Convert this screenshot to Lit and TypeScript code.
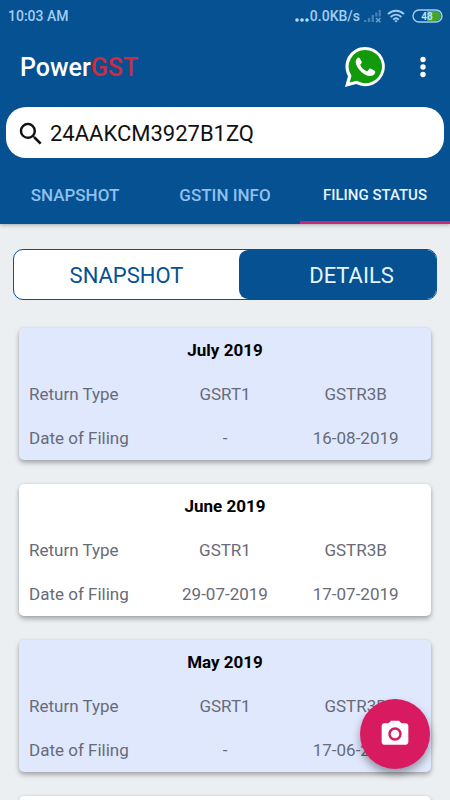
import { LitElement, html, css, nothing } from "lit";
import { customElement, property, state } from "lit/decorators.js";
import { classMap } from "lit/directives/class-map.js";

interface Filing {
  month: string;
  types: string[];
  dates: string[];
}

const FILINGS: Filing[] = [
  { month: "July 2019", types: ["GSRT1", "GSTR3B"], dates: ["-", "16-08-2019"] },
  { month: "June 2019", types: ["GSTR1", "GSTR3B"], dates: ["29-07-2019", "17-07-2019"] },
  { month: "May 2019", types: ["GSRT1", "GSTR3B"], dates: ["-", "17-06-2019"] },
];

@customElement("status-bar")
export class StatusBar extends LitElement {
  static styles = css`
    :host {
      display: flex;
      align-items: center;
      justify-content: space-between;
      height: 32px;
      padding: 0 7px 0 8px;
      color: #a3cdf3;
      font-size: 14px;
      font-weight: 500;
    }
    .right {
      display: flex;
      align-items: center;
    }
    .dots {
      width: 16px;
      height: 14px;
    }
    .signal {
      width: 18px;
      height: 14px;
      margin-left: 4px;
    }
    .wifi {
      width: 18px;
      height: 14px;
      margin-left: 5px;
    }
    .battery {
      width: 31px;
      height: 14px;
      margin-left: 7px;
    }
    .level {
      font-size: 10px;
      font-weight: 700;
    }
  `;

  render() {
    return html`
      <span>10:03 AM</span>
      <div class="right">
        <svg class="dots" viewBox="0 0 16 14" fill="#b9dcf8">
          <circle cx="3" cy="11" r="1.8" /><circle cx="8" cy="11" r="1.8" /><circle cx="13" cy="11" r="1.8" />
        </svg>
        <span>0.0KB/s</span>
        <svg class="signal" viewBox="0 0 18 14" fill="#4580b3">
          <rect x="0" y="11" width="2.4" height="2" />
          <rect x="3.8" y="9" width="2.4" height="4" />
          <rect x="7.6" y="6" width="2.4" height="7" />
          <rect x="11.2" y="3.5" width="2.2" height="4" />
          <rect x="14.6" y="1" width="2.2" height="6.5" />
          <path d="M12 9l4.4 4.2M16.4 9L12 13.2" stroke="#6fa2cd" stroke-width="1.4" />
        </svg>
        <svg class="wifi" viewBox="0 0 18 14" fill="none" stroke="#a3cdf3" stroke-width="1.9">
          <path d="M1 5.2C5.6.6 12.4.6 17 5.2M3.6 8c3.2-3.1 7.6-3.1 10.8 0M6.2 10.6c1.7-1.6 3.9-1.6 5.6 0" />
          <path d="M7.2 11.8L9 13.6l1.8-1.8q-1.8-1.2-3.6 0z" fill="#a3cdf3" stroke="none" />
        </svg>
        <svg class="battery" viewBox="0 0 31 14">
          <path d="M15 2h9a5 5 0 0 1 0 10h-9z" fill="#3fa535" />
          <rect x="1" y="1" width="29" height="12" rx="6" fill="none" stroke="#a3cdf3" stroke-width="1.4" />
          <text class="level" x="15" y="10.6" text-anchor="middle" fill="#c4e0f6">48</text>
        </svg>
      </div>
    `;
  }
}

@customElement("filing-card")
export class FilingCard extends LitElement {
  @property({ attribute: false }) filing?: Filing;

  static styles = css`
    :host {
      display: block;
      min-height: 132px;
      box-sizing: border-box;
      padding: 0 10px;
      border-radius: 5px;
      background: #fff;
      box-shadow: 0 3px 5px rgba(0, 0, 0, 0.28), 0 0 3px rgba(0, 0, 0, 0.1);
    }
    :host([tinted]) {
      background: #e0e8fe;
    }
    table {
      width: 100%;
      table-layout: fixed;
      border-collapse: collapse;
      color: #676b77;
      font-size: 17px;
      line-height: 44px;
    }
    caption {
      color: #000;
      font-weight: 700;
    }
    th,
    td {
      padding: 0;
      font-weight: 400;
      text-align: center;
      white-space: nowrap;
    }
    th {
      text-align: left;
    }
  `;

  render() {
    const f = this.filing;
    if (!f) return nothing;
    return html`
      <table>
        <caption>${f.month}</caption>
        <tbody>
          <tr><th scope="row">Return Type</th>${f.types.map((t) => html`<td>${t}</td>`)}</tr>
          <tr><th scope="row">Date of Filing</th>${f.dates.map((d) => html`<td>${d}</td>`)}</tr>
        </tbody>
      </table>
    `;
  }
}

@customElement("app-root")
export class AppRoot extends LitElement {
  @state() private tab = "FILING STATUS";
  @state() private view = "DETAILS";

  static styles = css`
    :host {
      display: flex;
      flex-direction: column;
      height: 100vh;
      overflow: hidden;
      background: #ebeff2;
      font-family: Roboto, "Liberation Sans", sans-serif;
    }
    button {
      border: 0;
      padding: 0;
      background: none;
      font-family: inherit;
      cursor: pointer;
    }
    header {
      flex: none;
      background: #055192;
      box-shadow: 0 1px 4px rgba(0, 0, 0, 0.3);
    }
    .bar {
      display: flex;
      align-items: center;
      height: 68px;
      box-sizing: border-box;
      padding: 2px 15px 0 20px;
    }
    h1 {
      flex: 1;
      margin: 0;
      color: #fff;
      font-size: 25px;
      font-weight: 500;
    }
    .accent {
      color: #cf2a41;
    }
    .chat,
    .more {
      display: flex;
    }
    .chat svg {
      width: 40px;
      height: 40px;
    }
    .more {
      margin-left: 26px;
    }
    .more svg {
      width: 24px;
      height: 24px;
    }
    .search {
      display: flex;
      align-items: center;
      gap: 4px;
      height: 51px;
      margin: 7px 6px 0;
      box-sizing: border-box;
      padding: 2px 10px 0;
      border-radius: 20px;
      background: #fff;
    }
    .search svg {
      flex: none;
      width: 30px;
      height: 30px;
    }
    .search input {
      flex: 1;
      min-width: 0;
      border: 0;
      padding: 0;
      outline: 0;
      background: none;
      color: #111;
      font-family: inherit;
      font-size: 22px;
    }
    .tabs {
      display: grid;
      grid-template-columns: repeat(3, 1fr);
      height: 66px;
    }
    .tab {
      border-top: 10px solid transparent;
      border-bottom: 3px solid transparent;
      color: #8fc0ee;
      font-size: 17px;
      font-weight: 500;
      white-space: nowrap;
    }
    .tab.on {
      border-bottom-color: #c3287a;
      color: #e4f5ff;
      font-size: 15px;
    }
    main {
      flex: 1;
      min-height: 0;
      overflow: hidden auto;
      scrollbar-width: none;
      padding: 25px 19px 0;
    }
    .switch {
      display: grid;
      grid-template-columns: 8fr 7fr;
      height: 51px;
      box-sizing: border-box;
      margin: 0 -6px 28px;
      border: 1px solid #055192;
      border-radius: 10px;
      background: #fff;
    }
    .choice {
      padding-top: 2px;
      border-radius: 9px;
      color: #055192;
      font-size: 22px;
    }
    .choice:last-child {
      padding-left: 28px;
    }
    .choice.on {
      background: #055192;
      color: #e4f5ff;
    }
    .cards {
      display: flex;
      flex-direction: column;
      gap: 24px;
      padding-bottom: 24px;
    }
    .fab {
      position: fixed;
      right: 20px;
      bottom: 31px;
      display: flex;
      align-items: center;
      justify-content: center;
      width: 70px;
      height: 70px;
      border-radius: 50%;
      background: #d81b60;
      box-shadow: 0 5px 9px rgba(0, 0, 0, 0.36);
    }
    .fab svg {
      width: 32px;
      height: 32px;
    }
  `;

  private renderTab(name: string) {
    const on = this.tab === name;
    return html`<button
      class=${classMap({ tab: true, on })}
      role="tab"
      aria-selected=${on}
      @click=${() => (this.tab = name)}
    >${name}</button>`;
  }

  private renderChoice(name: string) {
    const on = this.view === name;
    return html`<button
      class=${classMap({ choice: true, on })}
      aria-pressed=${on}
      @click=${() => (this.view = name)}
    >${name}</button>`;
  }

  render() {
    return html`
      <header>
        <status-bar></status-bar>
        <div class="bar">
          <h1>Power<span class="accent">GST</span></h1>
          <button class="chat" aria-label="WhatsApp">
            <svg viewBox="0 0 40 40">
              <path d="M20.3 0A19.6 19.6 0 1 1 11.2 37L0 40l3-10.8A19.6 19.6 0 0 1 20.3 0z" fill="#fff" />
              <path d="M20.4 3a16.6 16.6 0 1 1-8.6 30.8L4.6 35.6l1.9-6.8A16.6 16.6 0 0 1 20.4 3z" fill="#129a0c" />
              <path
                d="M14.6 11.1c-.5-.8-1.6-.7-2.4.1-1.7 1.7-1.9 4.2-.8 6.7 2 4.7 6.5 9.2 11.4 10.8 2.6.8 5.6.1 6.900-1.900.6-1 .7-2.200.2-2.700-.9-.9-3-1.900-4.200-2.400-.6-.2-1.100-.1-1.500.4l-1.400 1.700c-.4.5-.9.500-1.500.2-2.800-1.400-4.500-3.200-5.800-5.600-.3-.5-.2-.9.200-1.300.8-.9 1.300-1.600 1-2.400z"
                fill="#fff"
              />
            </svg>
          </button>
          <button class="more" aria-label="More options">
            <svg viewBox="0 0 24 24" fill="#fff">
              <circle cx="12" cy="4.5" r="2.7" /><circle cx="12" cy="12" r="2.7" /><circle cx="12" cy="19.5" r="2.7" />
            </svg>
          </button>
        </div>
        <div class="search">
          <svg viewBox="0 0 24 24" fill="#111">
            <path
              d="M15.5 14h-.79l-.28-.27A6.471 6.471 0 0 0 16 9.5 6.5 6.5 0 1 0 9.5 16c1.61 0 3.09-.59 4.23-1.57l.27.28v.79l5 4.99L20.49 19l-4.99-5zm-6 0C7.01 14 5 11.99 5 9.5S7.01 5 9.5 5 14 7.01 14 9.5 11.99 14 9.5 14z"
            />
          </svg>
          <input type="text" aria-label="GSTIN" value="24AAKCM3927B1ZQ" />
        </div>
        <nav class="tabs" role="tablist">
          ${["SNAPSHOT", "GSTIN INFO", "FILING STATUS"].map((n) => this.renderTab(n))}
        </nav>
      </header>
      <main>
        <div class="switch">${["SNAPSHOT", "DETAILS"].map((n) => this.renderChoice(n))}</div>
        <div class="cards">
          ${FILINGS.map((f, i) => html`<filing-card .filing=${f} ?tinted=${i % 2 === 0}></filing-card>`)}
          <filing-card></filing-card>
        </div>
      </main>
      <button class="fab" aria-label="Camera">
        <svg viewBox="0 0 24 24">
          <path
            fill="#fff"
            fill-rule="evenodd"
            d="M9 2L7.17 4H4c-1.1 0-2 .9-2 2v12c0 1.1.9 2 2 2h16c1.1 0 2-.9 2-2V6c0-1.1-.9-2-2-2h-3.17L15 2H9zm3 15c-2.76 0-5-2.24-5-5s2.24-5 5-5 5 2.24 5 5-2.24 5-5 5z"
          />
          <circle cx="12" cy="12" r="3.2" fill="#fff" />
        </svg>
      </button>
    `;
  }
}
